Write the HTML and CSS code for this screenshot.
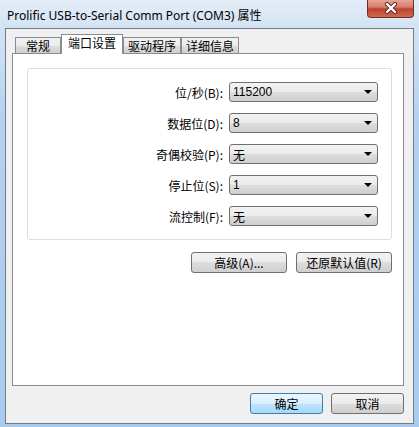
FILE: index.html
```html
<!DOCTYPE html>
<html lang="zh-CN">
<head>
    <meta charset="UTF-8">
    <title>Prolific USB-to-Serial Comm Port (COM3) 属性</title>
    <link rel="stylesheet" href="styles.css">
</head>
<body>
    <div class="window">
        <div class="titlebar">
            <span class="title">Prolific USB-to-Serial Comm Port (COM3) 属性</span>
            <div class="close">
                <svg width="14" height="12" viewBox="0 0 14 12">
                    <path d="M3 2 L11 10 M11 2 L3 10" stroke="#5b2a22" stroke-width="4.2" stroke-linecap="round"/>
                    <path d="M3 2 L11 10 M11 2 L3 10" stroke="#ffffff" stroke-width="2.4" stroke-linecap="round"/>
                </svg>
            </div>
        </div>
        <div class="client">
            <div class="tabs">
                <div class="tab">常规</div>
                <div class="tab active">端口设置</div>
                <div class="tab">驱动程序</div>
                <div class="tab">详细信息</div>
            </div>
            <div class="panel">
                <div class="group">
                    <div class="row">
                        <span class="label">位/秒(B):</span>
                        <div class="combo"><span>115200</span><i class="arrow"></i></div>
                    </div>
                    <div class="row">
                        <span class="label">数据位(D):</span>
                        <div class="combo"><span>8</span><i class="arrow"></i></div>
                    </div>
                    <div class="row">
                        <span class="label">奇偶校验(P):</span>
                        <div class="combo"><span>无</span><i class="arrow"></i></div>
                    </div>
                    <div class="row">
                        <span class="label">停止位(S):</span>
                        <div class="combo"><span>1</span><i class="arrow"></i></div>
                    </div>
                    <div class="row">
                        <span class="label">流控制(F):</span>
                        <div class="combo"><span>无</span><i class="arrow"></i></div>
                    </div>
                </div>
                <div class="actions">
                    <button class="btn wide">高级(A)...</button>
                    <button class="btn wide">还原默认值(R)</button>
                </div>
            </div>
            <div class="footer">
                <button class="btn default">确定</button>
                <button class="btn">取消</button>
            </div>
        </div>
    </div>
</body>
</html>
```

FILE: styles.css
```css
html, body {
    margin: 0;
    padding: 0;
}
body {
    font-family: "Noto Sans CJK SC", "Liberation Sans", sans-serif;
    font-size: 12px;
    color: #000;
}
.window {
    width: 419px;
    height: 427px;
    box-sizing: border-box;
    padding: 0 5px 3px 5px;
    display: flex;
    flex-direction: column;
    background: linear-gradient(180deg, #e4edf7 0px, #d3e3f4 28px, #b4d1f0 120px, #a9cbee 427px);
}
.titlebar {
    height: 28px;
    display: flex;
    justify-content: space-between;
    align-items: flex-start;
}
.title {
    font-family: "Noto Sans", "Noto Sans CJK SC", sans-serif;
    font-size: 12px;
    padding-left: 2px;
    margin-top: 6px;
    color: #000;
}
.close {
    width: 47px;
    height: 19px;
    box-sizing: border-box;
    margin-top: -1px;
    border: 1px solid #6b2f26;
    border-top: none;
    border-radius: 0 0 4px 4px;
    background: linear-gradient(180deg, #e9a99b 0%, #d47d6c 45%, #c0412c 55%, #cf6a54 100%);
    display: flex;
    align-items: center;
    justify-content: center;
}
.client {
    flex: 1;
    display: flex;
    flex-direction: column;
    border: 1px solid #6f7d8e;
    background: #f0f0f0;
    padding: 5px 9px 9px 6px;
}
.tabs {
    display: flex;
    align-items: flex-end;
    height: 20px;
    margin-bottom: -1px;
    padding-left: 3px;
}
.tab {
    box-sizing: border-box;
    height: 17px;
    min-width: 46px;
    padding: 0 4px;
    text-align: center;
    line-height: 16px;
    border: 1px solid #898c95;
    border-bottom: none;
    background: linear-gradient(180deg, #f2f2f2 0%, #ebebeb 50%, #dddddd 50%, #cfcfcf 100%);
}
.tab + .tab {
    margin-left: 0;
}
.tab.active {
    position: relative;
    height: 20px;
    padding: 0 6px;
    line-height: 16px;
    background: #fff;
}
.panel {
    flex: 1;
    border: 1px solid #898c95;
    background: #fff;
    padding: 14px 11px 0 14px;
}
.group {
    border: 1px solid #d5dfe5;
    border-radius: 3px;
    padding: 13px 13px 13px 0;
    display: flex;
    flex-direction: column;
    gap: 11px;
}
.row {
    display: flex;
    justify-content: flex-end;
    align-items: center;
    gap: 6px;
    height: 20px;
}
.label {
    white-space: nowrap;
}
.combo {
    width: 149px;
    height: 20px;
    box-sizing: border-box;
    border: 1px solid #707070;
    border-radius: 3px;
    background: linear-gradient(180deg, #f2f2f2 0%, #ebebeb 50%, #dddddd 50%, #cfcfcf 100%);
    display: flex;
    align-items: center;
    justify-content: space-between;
    padding: 0 5px 0 3px;
}
.combo span {
    font-family: "Liberation Sans", "Noto Sans CJK SC", sans-serif;
    font-size: 12px;
}
.arrow {
    width: 0;
    height: 0;
    border-left: 4px solid transparent;
    border-right: 4px solid transparent;
    border-top: 4px solid #000;
}
.actions {
    display: flex;
    justify-content: flex-end;
    gap: 9px;
    margin-top: 12px;
}
.btn {
    font-family: "Noto Sans CJK SC", sans-serif;
    font-size: 12px;
    color: #000;
    height: 21px;
    width: 73px;
    padding: 0;
    box-sizing: border-box;
    border: 1px solid #707070;
    border-radius: 3px;
    background: linear-gradient(180deg, #f2f2f2 0%, #ebebeb 50%, #dddddd 50%, #cfcfcf 100%);
    line-height: 18px;
}
.btn.wide {
    width: 96px;
}
.btn.default {
    border-color: #3c7fb1;
    background: linear-gradient(180deg, #eaf6fd 0%, #d9f0fc 50%, #bee6fd 50%, #a7d9f5 100%);
}
.footer {
    display: flex;
    justify-content: flex-end;
    gap: 8px;
    margin-top: 7px;
}
```
